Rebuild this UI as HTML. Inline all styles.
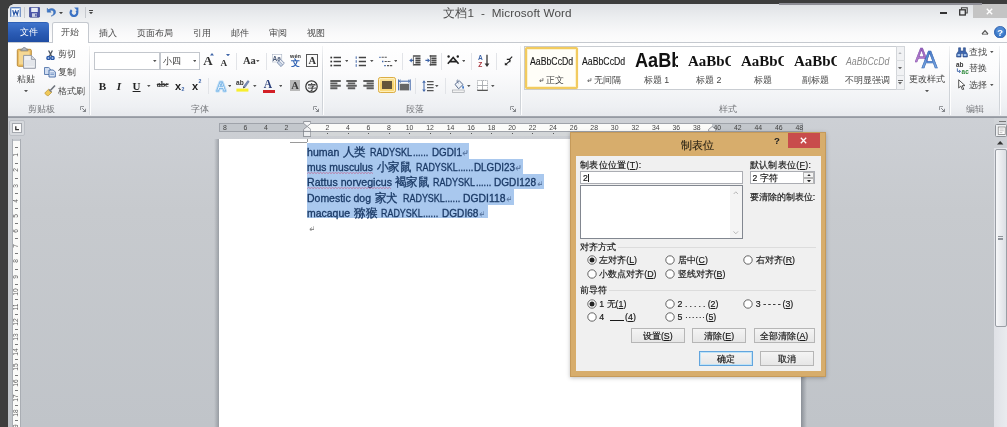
<!DOCTYPE html>
<html><head><meta charset="utf-8"><title>Word</title>
<style>
html,body{margin:0;padding:0}
body{width:1007px;height:427px;overflow:hidden;position:relative;background:#3d3d3d;font-family:"Liberation Sans",sans-serif}
div,svg{position:absolute;box-sizing:border-box}
.t{white-space:nowrap;overflow:visible}
span.s{display:inline-block;white-space:nowrap}
</style></head><body><div id="w" style="left:0;top:0;width:1007px;height:427px;will-change:transform">
<div style="left:8px;top:3.6px;width:999px;height:39px;background:linear-gradient(#dfe1e5 0%,#eceef0 35%,#f9f9fa 75%,#fdfdfd 100%)"></div>
<div style="left:8px;top:3.6px;width:6px;height:6px;background:radial-gradient(circle at 6px 6px,rgba(0,0,0,0) 5.5px,#3d3d3d 6px)"></div>
<div style="left:973px;top:4px;width:34px;height:13.5px;background:#c4c4c4"></div>
<svg style="left:985.5px;top:7.5px;" width="7" height="7" viewBox="0 0 7 7"><path d="M0.8 0.8L6.2 6.2M6.2 0.8L0.8 6.2" stroke="#fff" stroke-width="1.4"/></svg>
<div style="left:940px;top:12px;width:7px;height:2px;background:#333"></div>
<svg style="left:958.5px;top:6.5px;" width="9" height="9" viewBox="0 0 9 9"><path d="M2.5 2.5V0.8H8.2V6H6.5" fill="none" stroke="#444" stroke-width="1.1"/><rect x="0.7" y="2.8" width="5.6" height="5.2" fill="none" stroke="#333" stroke-width="1.3"/></svg>
<div class="t" style="left:407.5px;top:6.0px;width:200px;text-align:center;font-size:11.7px;line-height:14px;color:#4b4b4b;white-space:pre;letter-spacing:.12px">文档1  -  Microsoft Word</div>
<svg style="left:9.9px;top:6.7px;" width="11.2" height="10.8" viewBox="0 0 13 12.5"><rect x="0.5" y="0.5" width="12" height="11.5" rx="1" fill="#e9f0fa" stroke="#3b67b0" stroke-width="1"/><rect x="2" y="2" width="9" height="8.5" fill="#fff" stroke="#8fb0dc" stroke-width=".6"/><path d="M3.2 3.5L4.6 9L6.5 4.6L8.4 9L9.8 3.5" fill="none" stroke="#2a56a4" stroke-width="1.4"/></svg>
<div style="left:24px;top:7px;width:1px;height:11px;background:#c6c9ce"></div>
<svg style="left:29px;top:7px;" width="11" height="10.5" viewBox="0 0 11 10.5"><rect x="0.3" y="0.3" width="10.4" height="9.9" rx="1" fill="#4a55a8" stroke="#2c3580" stroke-width=".6"/><rect x="2.2" y="0.8" width="6.6" height="4.2" fill="#e8ecf6"/><rect x="3" y="6.3" width="5" height="3.6" fill="#c9cfe6"/><rect x="6.3" y="6.9" width="1.2" height="2.5" fill="#3a4494"/></svg>
<svg style="left:46px;top:7px;" width="10" height="10" viewBox="0 0 10 10"><path d="M1.2 1.2V5.2H5.2L3.7 3.8C5.3 2.6 7.6 3.2 7.6 5.4C7.6 7 6.6 8.2 5 9.2C8 8.6 9.6 7 9.6 5C9.6 1.8 5.4 0.2 2.6 2.6Z" fill="#3f78c8" stroke="#2d5fa8" stroke-width=".4"/></svg>
<svg style="left:58.8px;top:11.9px;" width="4" height="2.2" viewBox="0 0 4 2.2"><path d="M0 0H4L2.0 2.2Z" fill="#444"/></svg>
<svg style="left:69.3px;top:7.2px;" width="10" height="10" viewBox="0 0 10 10"><path d="M2.7 3.2A3.3 3.3 0 1 0 7.4 3.4" fill="none" stroke="#3b72c4" stroke-width="2.3"/><path d="M5.2 0.4H9.4V4.8Z" fill="#3b72c4"/></svg>
<div style="left:85px;top:7px;width:1px;height:11px;background:#c6c9ce"></div>
<div style="left:88.6px;top:10.2px;width:4px;height:1px;background:#444"></div>
<svg style="left:88.6px;top:12.1px;" width="4" height="2.2" viewBox="0 0 4 2.2"><path d="M0 0H4L2.0 2.2Z" fill="#444"/></svg>
<div style="left:8px;top:22px;width:41px;height:20.4px;background:linear-gradient(#3f74cc,#2a5bb4 55%,#1f4da3);border-radius:0 3px 0 0;border-top:1px solid #2e60b6"></div>
<div class="t" style="left:8.6px;top:26.3px;width:40px;text-align:center;font-size:8.8px;line-height:12px;color:#fff;">文件</div>
<div class="t" style="left:78.0px;top:26.6px;width:60px;text-align:center;font-size:8.8px;line-height:12px;color:#4a4a4a;">插入</div>
<div class="t" style="left:124.9px;top:26.6px;width:60px;text-align:center;font-size:8.8px;line-height:12px;color:#4a4a4a;">页面布局</div>
<div class="t" style="left:172.0px;top:26.6px;width:60px;text-align:center;font-size:8.8px;line-height:12px;color:#4a4a4a;">引用</div>
<div class="t" style="left:210.0px;top:26.6px;width:60px;text-align:center;font-size:8.8px;line-height:12px;color:#4a4a4a;">邮件</div>
<div class="t" style="left:248.3px;top:26.6px;width:60px;text-align:center;font-size:8.8px;line-height:12px;color:#4a4a4a;">审阅</div>
<div class="t" style="left:286.0px;top:26.6px;width:60px;text-align:center;font-size:8.8px;line-height:12px;color:#4a4a4a;">视图</div>
<svg style="left:980.5px;top:29px;" width="8" height="6" viewBox="0 0 8 6"><path d="M1 5L4 1.6L7 5" fill="none" stroke="#555" stroke-width="1.2"/><path d="M1 5.2H7" stroke="#555" stroke-width=".8"/></svg>
<svg style="left:993.6px;top:25.6px;" width="12.4" height="12.4" viewBox="0 0 12.4 12.4"><circle cx="6.2" cy="6.2" r="5.8" fill="#3b78c8" stroke="#2a5aa8" stroke-width=".8"/><circle cx="6.2" cy="5" r="4.2" fill="#5c96dc" opacity=".6"/><text x="6.2" y="9.6" font-size="9.5" font-weight="bold" fill="#fff" text-anchor="middle" font-family="Liberation Sans">?</text></svg>
<div style="left:779px;top:3.4px;width:203px;height:1.5px;background:#8e8e96"></div>
<div style="left:8px;top:42px;width:999px;height:76px;background:linear-gradient(#ffffff 0%,#fbfbfc 40%,#eef0f3 85%,#e6e8ec 100%);border-top:1px solid #c5c9cf"></div>
<div style="left:8px;top:116px;width:999px;height:2.2px;background:linear-gradient(#a9adb4,#8f949c)"></div>
<div style="left:52.2px;top:22.3px;width:36.8px;height:20.8px;background:#fff;border:1px solid #c5c9cf;border-bottom:none;border-radius:2.5px 2.5px 0 0"></div>
<div class="t" style="left:50.3px;top:26.3px;width:40px;text-align:center;font-size:8.8px;line-height:12px;color:#4a4a4a;">开始</div>
<div style="left:89px;top:46px;width:1px;height:69px;background:linear-gradient(rgba(200,204,210,.2),#cfd3d8 40%,#cfd3d8 90%,rgba(200,204,210,.4))"></div>
<div style="left:90px;top:46px;width:1px;height:69px;background:rgba(255,255,255,.9)"></div>
<div style="left:322px;top:46px;width:1px;height:69px;background:linear-gradient(rgba(200,204,210,.2),#cfd3d8 40%,#cfd3d8 90%,rgba(200,204,210,.4))"></div>
<div style="left:323px;top:46px;width:1px;height:69px;background:rgba(255,255,255,.9)"></div>
<div style="left:519.6px;top:46px;width:1px;height:69px;background:linear-gradient(rgba(200,204,210,.2),#cfd3d8 40%,#cfd3d8 90%,rgba(200,204,210,.4))"></div>
<div style="left:520.6px;top:46px;width:1px;height:69px;background:rgba(255,255,255,.9)"></div>
<div style="left:949.4px;top:46px;width:1px;height:69px;background:linear-gradient(rgba(200,204,210,.2),#cfd3d8 40%,#cfd3d8 90%,rgba(200,204,210,.4))"></div>
<div style="left:950.4px;top:46px;width:1px;height:69px;background:rgba(255,255,255,.9)"></div>
<div style="left:999.2px;top:46px;width:1px;height:69px;background:linear-gradient(rgba(200,204,210,.2),#cfd3d8 40%,#cfd3d8 90%,rgba(200,204,210,.4))"></div>
<div style="left:1000.2px;top:46px;width:1px;height:69px;background:rgba(255,255,255,.9)"></div>
<div class="t" style="left:11.5px;top:103.0px;width:60px;text-align:center;font-size:8.8px;line-height:12px;color:#77797d;">剪贴板</div>
<div class="t" style="left:169.5px;top:103.0px;width:60px;text-align:center;font-size:8.8px;line-height:12px;color:#77797d;">字体</div>
<div class="t" style="left:384.7px;top:103.0px;width:60px;text-align:center;font-size:8.8px;line-height:12px;color:#77797d;">段落</div>
<div class="t" style="left:697.7px;top:103.0px;width:60px;text-align:center;font-size:8.8px;line-height:12px;color:#77797d;">样式</div>
<div class="t" style="left:945.0px;top:103.0px;width:60px;text-align:center;font-size:8.8px;line-height:12px;color:#77797d;">编辑</div>
<svg style="left:80px;top:105.5px;" width="6" height="6" viewBox="0 0 6 6"><path d="M0.5 4V0.5H4" fill="none" stroke="#8a8d92" stroke-width=".9"/><path d="M2.2 2.2L5.4 5.4M5.6 2.8V5.6H2.8" fill="none" stroke="#6f7277" stroke-width=".9"/></svg>
<svg style="left:313px;top:105.5px;" width="6" height="6" viewBox="0 0 6 6"><path d="M0.5 4V0.5H4" fill="none" stroke="#8a8d92" stroke-width=".9"/><path d="M2.2 2.2L5.4 5.4M5.6 2.8V5.6H2.8" fill="none" stroke="#6f7277" stroke-width=".9"/></svg>
<svg style="left:510px;top:105.5px;" width="6" height="6" viewBox="0 0 6 6"><path d="M0.5 4V0.5H4" fill="none" stroke="#8a8d92" stroke-width=".9"/><path d="M2.2 2.2L5.4 5.4M5.6 2.8V5.6H2.8" fill="none" stroke="#6f7277" stroke-width=".9"/></svg>
<svg style="left:939px;top:105.5px;" width="6" height="6" viewBox="0 0 6 6"><path d="M0.5 4V0.5H4" fill="none" stroke="#8a8d92" stroke-width=".9"/><path d="M2.2 2.2L5.4 5.4M5.6 2.8V5.6H2.8" fill="none" stroke="#6f7277" stroke-width=".9"/></svg>
<svg style="left:16px;top:46px;" width="22" height="23" viewBox="0 0 22 23">
<rect x="1.3" y="3.3" width="14" height="17" rx="1.2" fill="#edbe62" stroke="#bb8c3c" stroke-width="1"/>
<rect x="3" y="5.4" width="10.6" height="13" fill="#f5d894"/>
<path d="M4.8 4.8V3.2H6.4C6.4 0.9 10.2 0.9 10.2 3.2H11.8V4.8Z" fill="#b3b6bc" stroke="#74787f" stroke-width=".7"/>
<path d="M7.6 9.4H15.4L19.4 13.4V22.3H7.6Z" fill="#eef0f3" stroke="#8b929e" stroke-width=".9"/>
<path d="M9 15H18M9 17H18M9 19H18" stroke="#d3d7dd" stroke-width=".8"/>
<path d="M15.4 9.4V13.4H19.4" fill="#d9dde4" stroke="#8b929e" stroke-width=".8"/>
</svg>
<div class="t" style="left:5.6px;top:73.2px;width:40px;text-align:center;font-size:8.8px;line-height:12px;color:#444;">粘贴</div>
<svg style="left:24.0px;top:89.85px;" width="4" height="2.3" viewBox="0 0 4 2.3"><path d="M0 0H4L2.0 2.3Z" fill="#555"/></svg>
<svg style="left:45.5px;top:49.5px;" width="9" height="10.5" viewBox="0 0 9 10.5">
<path d="M2.6 0.5L5.6 6.2M6.4 0.5L3.4 6.2" stroke="#4a525e" stroke-width="1.3" fill="none"/>
<circle cx="2.5" cy="8" r="1.6" fill="#9db9e4" stroke="#2a58a8" stroke-width="1.4"/>
<circle cx="6.5" cy="8" r="1.6" fill="#9db9e4" stroke="#2a58a8" stroke-width="1.4"/>
</svg>
<div class="t" style="left:58px;top:48.4px;font-size:8.8px;line-height:12px;color:#444;">剪切</div>
<svg style="left:43.8px;top:67px;" width="12" height="10.5" viewBox="0 0 12 10.5">
<path d="M0.5 0.5H4.8L6.5 2.2V7.5H0.5Z" fill="#cfdcf0" stroke="#5577ad" stroke-width=".9"/>
<path d="M5 3H9.3L11.3 5V10H5Z" fill="#dfe9f7" stroke="#3f64a0" stroke-width=".9"/>
<path d="M6.3 6H10M6.3 7.6H10" stroke="#5f84bd" stroke-width=".8"/>
</svg>
<div class="t" style="left:58px;top:66.2px;font-size:8.8px;line-height:12px;color:#444;">复制</div>
<svg style="left:44px;top:85px;" width="12" height="11.5" viewBox="0 0 12 11.5">
<path d="M11 0.6L6.3 5.6" stroke="#6a6f78" stroke-width="1.5"/>
<path d="M4.6 4.2L7.8 7.2L4.2 10.8C2.8 10.6 1.4 9.4 0.8 8Z" fill="#f0c95a" stroke="#b8902e" stroke-width=".7"/>
<path d="M4.9 4.5L7.5 7" stroke="#7d7f85" stroke-width="1.3"/>
</svg>
<div class="t" style="left:58px;top:84.8px;font-size:8.8px;line-height:12px;color:#444;">格式刷</div>
<div style="left:93.5px;top:52px;width:66.5px;height:18.4px;background:#fff;border:1px solid #c3c7cd"></div>
<div style="left:159.5px;top:52px;width:40.2px;height:18.4px;background:#fff;border:1px solid #c3c7cd"></div>
<svg style="left:153.2px;top:60.35px;" width="3.6" height="2.1" viewBox="0 0 3.6 2.1"><path d="M0 0H3.6L1.8 2.1Z" fill="#555"/></svg>
<svg style="left:192.5px;top:60.35px;" width="3.6" height="2.1" viewBox="0 0 3.6 2.1"><path d="M0 0H3.6L1.8 2.1Z" fill="#555"/></svg>
<div class="t" style="left:163px;top:55.2px;font-size:8.8px;line-height:12px;color:#333;">小四</div>
<div class="t" style="left:203.3px;top:54.2px;font-size:13px;line-height:14px;color:#333;font-family:'Liberation Serif',serif;font-weight:bold">A</div>
<svg style="left:210.2px;top:53.2px;" width="4" height="2.4" viewBox="0 0 4 2.4"><path d="M0 2.4H4L2 0Z" fill="#3f65a8"/></svg>
<div class="t" style="left:220.6px;top:56.6px;font-size:9.2px;line-height:12px;color:#333;font-family:'Liberation Serif',serif;font-weight:bold">A</div>
<svg style="left:226.2px;top:53.6px;" width="4" height="2.4" viewBox="0 0 4 2.4"><path d="M0 0H4L2 2.4Z" fill="#3f65a8"/></svg>
<div style="left:236px;top:53px;width:1px;height:17px;background:#e2e4e8"></div>
<div class="t" style="left:243px;top:55.2px;font-size:10.5px;line-height:12px;color:#333;font-family:'Liberation Serif',serif;font-weight:bold">Aa</div>
<svg style="left:256.4px;top:60.35px;" width="3.6" height="2.1" viewBox="0 0 3.6 2.1"><path d="M0 0H3.6L1.8 2.1Z" fill="#555"/></svg>
<div style="left:266px;top:53px;width:1px;height:17px;background:#e2e4e8"></div>
<svg style="left:272px;top:53.5px;" width="13" height="13" viewBox="0 0 13 13">
<text x="0.5" y="6.6" font-size="6.5" font-weight="bold" fill="#4a5a78" font-family="Liberation Sans">Aa</text>
<rect x="0.2" y="0.6" width="9.6" height="7.4" fill="none" stroke="#9aa6ba" stroke-width=".5"/>
<path d="M5.2 8.6L8.6 5.4L12.4 9.2L9 12.4Z" fill="#e9edf4" stroke="#6d7f9f" stroke-width=".8"/>
<path d="M5.2 8.6L7 6.9L10.7 10.7L9 12.4Z" fill="#c9d4e6" stroke="#6d7f9f" stroke-width=".5"/>
</svg>
<svg style="left:288.5px;top:53px;" width="13" height="14" viewBox="0 0 13 14">
<text x="6.5" y="4.6" font-size="5.6" font-weight="bold" fill="#333" text-anchor="middle" font-family="Liberation Sans">wén</text>
<text x="6.5" y="13" font-size="9.2" fill="#2f62b4" text-anchor="middle" font-family="Liberation Sans" font-weight="bold">文</text>
</svg>
<div style="left:306.3px;top:54.2px;width:12px;height:12.6px;border:1px solid #555;background:#fafafa"></div>
<div class="t" style="left:306.3px;top:54.8px;width:12px;text-align:center;font-size:10.5px;line-height:12px;color:#333;font-family:'Liberation Serif',serif;font-weight:bold">A</div>
<div class="t" style="left:98.8px;top:79.6px;font-size:11.2px;line-height:12px;color:#222;font-family:'Liberation Serif',serif;font-weight:bold">B</div>
<div class="t" style="left:116.8px;top:79.6px;font-size:11.2px;line-height:12px;color:#222;font-family:'Liberation Serif',serif;font-style:italic;font-weight:bold">I</div>
<div class="t" style="left:132.6px;top:79.6px;font-size:11px;line-height:12px;color:#222;font-family:'Liberation Serif',serif;font-weight:bold;text-decoration:underline">U</div>
<svg style="left:147.2px;top:84.95px;" width="3.6" height="2.1" viewBox="0 0 3.6 2.1"><path d="M0 0H3.6L1.8 2.1Z" fill="#555"/></svg>
<div class="t" style="left:156.8px;top:79.4px;font-size:8.4px;line-height:12px;color:#333;font-family:'Liberation Serif',serif;font-weight:bold;text-decoration:line-through;letter-spacing:-.3px">abc</div>
<div class="t" style="left:175px;top:79.6px;font-size:11px;line-height:12px;color:#222;font-weight:bold">x</div>
<div class="t" style="left:181.6px;top:86.4px;font-size:5.2px;line-height:6px;color:#3f65a8;font-weight:bold">2</div>
<div class="t" style="left:192px;top:79.6px;font-size:11px;line-height:12px;color:#222;font-weight:bold">x</div>
<div class="t" style="left:198.4px;top:78.4px;font-size:5.2px;line-height:6px;color:#3f65a8;font-weight:bold">2</div>
<div style="left:208px;top:78px;width:1px;height:16px;background:#e2e4e8"></div>
<svg style="left:213.5px;top:78.5px;" width="14" height="14" viewBox="0 0 14 14">
<text x="7" y="12" font-size="13.5" font-weight="bold" fill="#fff" stroke="#bfdef6" stroke-width="2.8" text-anchor="middle" font-family="Liberation Sans" stroke-linejoin="round">A</text>
<text x="7" y="12" font-size="13.5" font-weight="bold" fill="#fdfeff" stroke="#72b1e6" stroke-width=".8" text-anchor="middle" font-family="Liberation Sans">A</text>
</svg>
<svg style="left:227.8px;top:84.95px;" width="3.6" height="2.1" viewBox="0 0 3.6 2.1"><path d="M0 0H3.6L1.8 2.1Z" fill="#555"/></svg>
<svg style="left:236px;top:79px;" width="14" height="13" viewBox="0 0 14 13">
<text x="0" y="6.2" font-size="6.6" font-weight="bold" fill="#333" font-family="Liberation Sans">ab</text>
<path d="M7.4 7.6L11.8 1.6L13.2 2.6L9 8.6Z" fill="#7b8fb8" stroke="#4a5f8c" stroke-width=".5"/>
<path d="M7.4 7.6L9 8.6L7 9.4Z" fill="#333"/>
<rect x="0.4" y="9.6" width="12" height="3" fill="#f7ee2e"/>
</svg>
<svg style="left:253.2px;top:84.95px;" width="3.6" height="2.1" viewBox="0 0 3.6 2.1"><path d="M0 0H3.6L1.8 2.1Z" fill="#555"/></svg>
<div class="t" style="left:263.8px;top:78.0px;font-size:11.5px;line-height:12px;color:#2b3f7a;font-family:'Liberation Serif',serif;font-weight:bold">A</div>
<div style="left:263px;top:89.6px;width:12px;height:3px;background:#d21f26"></div>
<svg style="left:278.8px;top:84.95px;" width="3.6" height="2.1" viewBox="0 0 3.6 2.1"><path d="M0 0H3.6L1.8 2.1Z" fill="#555"/></svg>
<div style="left:289.6px;top:80.3px;width:10.8px;height:11.2px;background:#b9b9b9"></div>
<div class="t" style="left:289.0px;top:79.9px;width:12px;text-align:center;font-size:10.5px;line-height:12px;color:#3a3a3a;font-family:'Liberation Serif',serif;font-weight:bold">A</div>
<svg style="left:304.6px;top:79.6px;" width="13" height="13" viewBox="0 0 13 13"><circle cx="6.5" cy="6.5" r="5.7" fill="none" stroke="#333" stroke-width="1.2"/><text x="6.5" y="9.5" font-size="8" font-weight="bold" fill="#222" text-anchor="middle" font-family="Liberation Sans">字</text></svg>
<svg style="left:329.5px;top:55.5px;" width="12" height="11" viewBox="0 0 12 11"><path d="M3.6 1.5H11M3.6 5.5H11M3.6 9.5H11" stroke="#444" stroke-width="1.4"/><rect x="0.4" y="0.7" width="1.7" height="1.7" fill="#333"/><rect x="0.4" y="4.7" width="1.7" height="1.7" fill="#333"/><rect x="0.4" y="8.7" width="1.7" height="1.7" fill="#333"/></svg>
<svg style="left:344.6px;top:60.35px;" width="3.6" height="2.1" viewBox="0 0 3.6 2.1"><path d="M0 0H3.6L1.8 2.1Z" fill="#555"/></svg>
<svg style="left:354.5px;top:55.5px;" width="12" height="11" viewBox="0 0 12 11"><path d="M3.8 1.5H11M3.8 5.5H11M3.8 9.5H11" stroke="#444" stroke-width="1.4"/><path d="M1.2 0.4V2.8M1.2 4.2V6.8M1.2 8.2V10.8" stroke="#3f65a8" stroke-width="1"/></svg>
<svg style="left:370.2px;top:60.35px;" width="3.6" height="2.1" viewBox="0 0 3.6 2.1"><path d="M0 0H3.6L1.8 2.1Z" fill="#555"/></svg>
<svg style="left:378.8px;top:55.5px;" width="14" height="11" viewBox="0 0 14 11"><path d="M2.6 1.3H8.5M5.6 5.5H12M8 9.6H13.5" stroke="#555" stroke-width="1.1" stroke-dasharray="2.2 .8"/><path d="M0.3 1.3H1.6M3 5.5H4.4M5.2 9.6H6.8" stroke="#3f65a8" stroke-width="1.3"/></svg>
<svg style="left:393.5px;top:60.35px;" width="3.6" height="2.1" viewBox="0 0 3.6 2.1"><path d="M0 0H3.6L1.8 2.1Z" fill="#555"/></svg>
<div style="left:402px;top:53px;width:1px;height:17px;background:#e2e4e8"></div>
<svg style="left:408.5px;top:55.3px;" width="12" height="11.5" viewBox="0 0 12 11.5"><path d="M4.6 1H11.5M6.4 3.2H11.5M6.4 5.4H11.5M6.4 7.6H11.5M4.6 9.8H11.5" stroke="#4a4a4a" stroke-width="1.6"/><path d="M0.2 5.4L2.8 3.2V4.7H5V6.1H2.8V7.6Z" fill="#3f65a8"/><path d="M4.4 0.2V10.6" stroke="#4a4a4a" stroke-width=".8"/></svg>
<svg style="left:424.8px;top:55.3px;" width="12" height="11.5" viewBox="0 0 12 11.5"><path d="M4.6 1H11.5M6.4 3.2H11.5M6.4 5.4H11.5M6.4 7.6H11.5M4.6 9.8H11.5" stroke="#4a4a4a" stroke-width="1.6"/><path d="M5.2 5.4L2.6 3.2V4.7H0.4V6.1H2.6V7.6Z" fill="#3f65a8"/><path d="M5.6 0.2V10.6" stroke="#4a4a4a" stroke-width=".8"/></svg>
<div style="left:441px;top:53px;width:1px;height:17px;background:#e2e4e8"></div>
<svg style="left:447.4px;top:54.6px;" width="13" height="10" viewBox="0 0 13 10"><path d="M0.8 8.8L6.2 2.4L11.6 8.8M2.8 6.6H9.6" fill="none" stroke="#222" stroke-width="1.6"/><circle cx="1.6" cy="1.5" r="1.2" fill="#222"/><circle cx="10.8" cy="1.5" r="1.2" fill="#222"/></svg>
<svg style="left:461.6px;top:60.35px;" width="3.6" height="2.1" viewBox="0 0 3.6 2.1"><path d="M0 0H3.6L1.8 2.1Z" fill="#555"/></svg>
<div style="left:471px;top:53px;width:1px;height:17px;background:#e2e4e8"></div>
<svg style="left:476.5px;top:54px;" width="14" height="14" viewBox="0 0 14 14"><text x="3.3" y="6" font-size="6.6" font-weight="bold" fill="#3f65a8" text-anchor="middle" font-family="Liberation Sans">A</text><text x="3.3" y="13" font-size="6.6" font-weight="bold" fill="#a8323a" text-anchor="middle" font-family="Liberation Sans">Z</text><path d="M10 0.8V11" stroke="#333" stroke-width="1.3"/><path d="M7.6 9.4L10 13L12.4 9.4Z" fill="#333"/></svg>
<div style="left:496px;top:53px;width:1px;height:17px;background:#e2e4e8"></div>
<svg style="left:503.6px;top:56px;" width="9" height="10" viewBox="0 0 9 10"><path d="M8.2 0.6L5.2 3.6M2.8 3.4H5.8V6.2M6.6 4.4L1.6 8.6" stroke="#222" stroke-width="1.2" fill="none"/><path d="M0.8 6.4V9.2H3.8Z" fill="#222"/><path d="M3 3.4H6V0.8Z" fill="#222" opacity=".0"/></svg>
<svg style="left:329.6px;top:80.4px;" width="12" height="9.4" viewBox="0 0 12 9.4"><path d="M0.3 1H10.8M0.3 3.4H7.4M0.3 5.8H10.8M0.3 8.2H7.4" stroke="#5e5e5e" stroke-width="1.9"/></svg>
<svg style="left:346px;top:80.4px;" width="12" height="9.4" viewBox="0 0 12 9.4"><path d="M0.3 1H10.8M1.8 3.4H9.2M0.3 5.8H10.8M1.8 8.2H9.2" stroke="#5e5e5e" stroke-width="1.9"/></svg>
<svg style="left:363px;top:80.4px;" width="12" height="9.4" viewBox="0 0 12 9.4"><path d="M0.3 1H10.8M3.6 3.4H10.8M0.3 5.8H10.8M3.6 8.2H10.8" stroke="#5e5e5e" stroke-width="1.9"/></svg>
<div style="left:378.3px;top:77px;width:17.7px;height:16px;background:linear-gradient(#fbe7a8,#f7d066 50%,#fadb82);border:1px solid #dcae45;border-radius:2.2px;box-shadow:inset 0 0 0 1px rgba(255,244,200,.8)"></div>
<div style="left:381.7px;top:80.7px;width:10.6px;height:8.4px;background:repeating-linear-gradient(#64553a 0,#64553a 1.7px,#7d6d4c 1.7px,#7d6d4c 2.1px)"></div>
<svg style="left:398px;top:79.2px;" width="13" height="12" viewBox="0 0 13 12"><path d="M0.6 0.4V11.4M12.2 0.4V11.4" stroke="#3f65a8" stroke-width="1"/><path d="M1.2 2.2H11.6" stroke="#3f65a8" stroke-width="1"/><path d="M2.8 0.8L1.2 2.2L2.8 3.6M10 0.8L11.6 2.2L10 3.6" fill="none" stroke="#3f65a8" stroke-width=".8"/><rect x="1.8" y="4.8" width="9.2" height="6.6" fill="#666"/></svg>
<div style="left:415px;top:78px;width:1px;height:16px;background:#e2e4e8"></div>
<svg style="left:421.5px;top:79.6px;" width="12" height="12" viewBox="0 0 12 12"><path d="M5 1.6H11.6M5 4.6H11.6M5 7.6H11.6M5 10.6H11.6" stroke="#555" stroke-width="1.1"/><path d="M2 0.2L3.8 2.8H0.2ZM2 12L3.8 9.4H0.2Z" fill="#3f65a8"/><path d="M2 2.4V9.8" stroke="#3f65a8" stroke-width="1"/></svg>
<svg style="left:435.4px;top:84.95px;" width="3.6" height="2.1" viewBox="0 0 3.6 2.1"><path d="M0 0H3.6L1.8 2.1Z" fill="#555"/></svg>
<div style="left:445px;top:78px;width:1px;height:16px;background:#e2e4e8"></div>
<svg style="left:451.5px;top:78.6px;" width="13" height="14" viewBox="0 0 13 14"><path d="M3 5.4L7.2 1.6L11 5.6L6.6 9.8Z" fill="#eef2f8" stroke="#4a5d82" stroke-width=".9"/><path d="M5.6 0.6C4.6 2 5.2 3.4 6.6 4.2" fill="none" stroke="#4a5d82" stroke-width=".8"/><path d="M10.8 6C11.6 7.4 12.6 8.2 11.8 9.4C11 10.2 10 9.4 10.2 8.2Z" fill="#3f78c8"/><rect x="0.6" y="11" width="11.6" height="2.6" fill="#f2f2f2" stroke="#9a9da3" stroke-width=".6"/></svg>
<svg style="left:467.4px;top:84.95px;" width="3.6" height="2.1" viewBox="0 0 3.6 2.1"><path d="M0 0H3.6L1.8 2.1Z" fill="#555"/></svg>
<svg style="left:476.8px;top:80px;" width="11" height="11" viewBox="0 0 11 11"><rect x="0.5" y="0.5" width="10" height="10" fill="#fff" stroke="#a6a9ae" stroke-width=".9" stroke-dasharray="1.2 .6"/><path d="M5.5 0.5V10.5M0.5 5.5H10.5" stroke="#a6a9ae" stroke-width=".9"/><path d="M0.3 10.4H10.7" stroke="#555" stroke-width="1.4"/></svg>
<svg style="left:491.4px;top:84.95px;" width="3.6" height="2.1" viewBox="0 0 3.6 2.1"><path d="M0 0H3.6L1.8 2.1Z" fill="#555"/></svg>
<div style="left:524.3px;top:46px;width:381px;height:44px;background:#fff;border:1px solid #c9cdd2"></div>
<div style="left:895.7px;top:46px;width:9.6px;height:44px;background:#f1f2f4;border:1px solid #d3d6da"></div>
<div style="left:895.7px;top:60.4px;width:9.6px;height:1px;background:#d9dcdf"></div>
<div style="left:895.7px;top:74.8px;width:9.6px;height:1px;background:#d9dcdf"></div>
<svg style="left:898.3px;top:52px;" width="4" height="2.4" viewBox="0 0 4 2.4"><path d="M0 2.4H4L2 0Z" fill="#b4b7bc"/></svg>
<svg style="left:898.3px;top:66.8px;" width="4" height="2.4" viewBox="0 0 4 2.4"><path d="M0 0H4L2.0 2.4Z" fill="#666"/></svg>
<div style="left:898.2px;top:79.6px;width:4.4px;height:1px;background:#666"></div>
<svg style="left:898.3px;top:82.4px;" width="4" height="2.4" viewBox="0 0 4 2.4"><path d="M0 0H4L2.0 2.4Z" fill="#666"/></svg>
<div style="left:525.2px;top:47px;width:52.6px;height:41.8px;background:#fffef8;border:2px solid #f2cb5f;border-radius:2.5px;box-shadow:inset 0 0 0 1px #fdf3cf,0 0 1px #f2cb5f"></div>
<div class="t" style="left:529.5px;top:55.0px;font-size:10.4px;line-height:14px;color:#1a1a1a;"><span class="s" style="display:inline-block;transform-origin:0 50%;transform:scaleX(0.84);-webkit-text-stroke:.15px #1a1a1a">AaBbCcDd</span></div>
<div class="t" style="left:582px;top:55.0px;font-size:10.4px;line-height:14px;color:#1a1a1a;"><span class="s" style="display:inline-block;transform-origin:0 50%;transform:scaleX(0.84);-webkit-text-stroke:.15px #1a1a1a">AaBbCcDd</span></div>
<svg style="left:539.3px;top:78.0px;" width="4.4" height="4.4" viewBox="0 0 4.4 4.4"><path d="M3.9 0.2V2.8H1M2.2 1.4L0.6 2.8L2.2 4.2" fill="none" stroke="#555" stroke-width=".8"/></svg>
<div class="t" style="left:546px;top:73.9px;font-size:8.8px;line-height:12px;color:#444;">正文</div>
<svg style="left:587.2px;top:78.0px;" width="4.4" height="4.4" viewBox="0 0 4.4 4.4"><path d="M3.9 0.2V2.8H1M2.2 1.4L0.6 2.8L2.2 4.2" fill="none" stroke="#555" stroke-width=".8"/></svg>
<div class="t" style="left:594px;top:73.9px;font-size:8.8px;line-height:12px;color:#444;">无间隔</div>
<div style="left:634px;top:48px;width:44.4px;height:24px;overflow:hidden"><div class="t" style="left:1px;top:1px;font-size:19.5px;line-height:22px;font-weight:bold;color:#111"><span class="s" style="transform-origin:0 50%;transform:scaleX(.93)">AaBb(</span></div></div>
<div class="t" style="left:643.7px;top:73.9px;font-size:8.8px;line-height:12px;color:#444;">标题 1</div>
<div style="left:687px;top:50px;width:44.2px;height:22px;overflow:hidden"><div class="t" style="left:1px;top:1px;font-size:15.6px;line-height:20px;color:#111;font-family:'Liberation Serif',serif;font-weight:bold;"><span class="s" style="transform-origin:0 50%;transform:scaleX(.96)">AaBbCc</span></div></div>
<div class="t" style="left:696px;top:73.9px;font-size:8.8px;line-height:12px;color:#444;">标题 2</div>
<div style="left:739.6px;top:50px;width:44.2px;height:22px;overflow:hidden"><div class="t" style="left:1px;top:1px;font-size:15.6px;line-height:20px;color:#111;font-family:'Liberation Serif',serif;font-weight:bold;"><span class="s" style="transform-origin:0 50%;transform:scaleX(.96)">AaBbCc</span></div></div>
<div class="t" style="left:753.6px;top:73.9px;font-size:8.8px;line-height:12px;color:#444;">标题</div>
<div style="left:792.6px;top:50px;width:44.2px;height:22px;overflow:hidden"><div class="t" style="left:1px;top:1px;font-size:15.6px;line-height:20px;color:#111;font-family:'Liberation Serif',serif;font-weight:bold;"><span class="s" style="transform-origin:0 50%;transform:scaleX(.96)">AaBbCc</span></div></div>
<div class="t" style="left:801.7px;top:73.9px;font-size:8.8px;line-height:12px;color:#444;">副标题</div>
<div class="t" style="left:846px;top:55.0px;font-size:10.2px;line-height:14px;color:#8a8a8a;"><span class="s" style="display:inline-block;transform-origin:0 50%;transform:scaleX(0.86);font-style:italic">AaBbCcDd</span></div>
<div class="t" style="left:845.3px;top:73.9px;font-size:8.8px;line-height:12px;color:#444;">不明显强调</div>
<svg style="left:914.5px;top:46px;" width="24" height="23" viewBox="0 0 24 23">
<defs><linearGradient id="gp" x1="0" y1="0" x2="0" y2="1"><stop offset="0" stop-color="#8a58b8"/><stop offset="1" stop-color="#c58ad6"/></linearGradient>
<linearGradient id="gb" x1="0" y1="0" x2="0" y2="1"><stop offset="0" stop-color="#3f72c4"/><stop offset="1" stop-color="#86b4e8"/></linearGradient></defs>
<text x="6.6" y="15.6" font-size="19.5" fill="url(#gp)" stroke="#7d4aa6" stroke-width=".5" text-anchor="middle" font-family="Liberation Sans">A</text>
<text x="14.6" y="21.6" font-size="23.5" fill="url(#gb)" stroke="#2f5fae" stroke-width=".6" text-anchor="middle" font-family="Liberation Sans">A</text>
</svg>
<div class="t" style="left:901.8px;top:72.7px;width:50px;text-align:center;font-size:8.8px;line-height:12px;color:#444;">更改样式</div>
<svg style="left:924.6px;top:89.85px;" width="4" height="2.3" viewBox="0 0 4 2.3"><path d="M0 0H4L2.0 2.3Z" fill="#555"/></svg>
<svg style="left:955.5px;top:47px;" width="12" height="10.5" viewBox="0 0 12 10.5"><path d="M2.6 0.8H4.6V4H7.4V0.8H9.4V4L11.4 7V10H7V6.6H5V10H0.6V7L2.6 4Z" fill="#3e66ad" stroke="#27457f" stroke-width=".6"/><rect x="1.6" y="7" width="2.6" height="2" fill="#9fc0ea"/><rect x="7.8" y="7" width="2.6" height="2" fill="#9fc0ea"/></svg>
<div class="t" style="left:969px;top:46.2px;font-size:8.8px;line-height:12px;color:#444;">查找</div>
<svg style="left:990.4px;top:51.35px;" width="3.6" height="2.1" viewBox="0 0 3.6 2.1"><path d="M0 0H3.6L1.8 2.1Z" fill="#555"/></svg>
<svg style="left:955.5px;top:62px;" width="13" height="12" viewBox="0 0 13 12"><text x="0" y="5.4" font-size="6.4" font-weight="bold" fill="#333" font-family="Liberation Sans">ab</text><text x="5.6" y="11.6" font-size="6.4" font-weight="bold" fill="#2f8a3c" font-family="Liberation Sans">ac</text><path d="M1.4 6.4V9.4H4.2M3 8L4.6 9.4L3 10.8" fill="none" stroke="#3f65a8" stroke-width=".9"/></svg>
<div class="t" style="left:969px;top:62.2px;font-size:8.8px;line-height:12px;color:#444;">替换</div>
<svg style="left:957.5px;top:78.6px;" width="8" height="11.5" viewBox="0 0 8 11.5"><path d="M0.7 0.8V9L2.8 7L4.4 10.8L5.8 10.2L4.2 6.6H7Z" fill="#fff" stroke="#444" stroke-width=".9" stroke-linejoin="round"/></svg>
<div class="t" style="left:969px;top:78.5px;font-size:8.8px;line-height:12px;color:#444;">选择</div>
<svg style="left:990.4px;top:83.55px;" width="3.6" height="2.1" viewBox="0 0 3.6 2.1"><path d="M0 0H3.6L1.8 2.1Z" fill="#555"/></svg>
<div style="left:8px;top:118px;width:999px;height:309px;background:linear-gradient(#cdd0d5 0%,#c7cace 30%,#c0c4c9 100%)"></div>
<div style="left:214.4px;top:139px;width:5px;height:288px;background:linear-gradient(90deg,rgba(110,116,124,0),rgba(110,116,124,.5))"></div>
<div style="left:800.6px;top:139px;width:6px;height:288px;background:linear-gradient(90deg,rgba(105,111,120,.62),rgba(110,116,124,0))"></div>
<div style="left:219.4px;top:138.8px;width:581.2px;height:289px;background:#fff"></div>
<div style="left:219px;top:123.4px;width:583.6px;height:8.2px;background:#c3c7cc;border:1px solid #9fa3aa"></div>
<div style="left:307.3px;top:124.2px;width:404.6px;height:6.6px;background:#fbfbf9"></div>
<div style="left:307.3px;top:131.6px;width:404.6px;height:4.6px;background:#d3d6d8"></div>
<div class="t" style="left:216.82px;top:123.6px;width:16px;text-align:center;font-size:6.9px;line-height:8px;color:#444;">8</div>
<div class="t" style="left:237.34px;top:123.6px;width:16px;text-align:center;font-size:6.9px;line-height:8px;color:#444;">6</div>
<div class="t" style="left:257.86px;top:123.6px;width:16px;text-align:center;font-size:6.9px;line-height:8px;color:#444;">4</div>
<div class="t" style="left:278.38px;top:123.6px;width:16px;text-align:center;font-size:6.9px;line-height:8px;color:#444;">2</div>
<div class="t" style="left:319.42px;top:123.6px;width:16px;text-align:center;font-size:6.9px;line-height:8px;color:#444;">2</div>
<div style="left:327.02px;top:132.6px;width:0.9px;height:1.8px;background:#555"></div>
<div class="t" style="left:339.94px;top:123.6px;width:16px;text-align:center;font-size:6.9px;line-height:8px;color:#444;">4</div>
<div style="left:347.54px;top:132.6px;width:0.9px;height:1.8px;background:#555"></div>
<div class="t" style="left:360.46px;top:123.6px;width:16px;text-align:center;font-size:6.9px;line-height:8px;color:#444;">6</div>
<div style="left:368.06px;top:132.6px;width:0.9px;height:1.8px;background:#555"></div>
<div class="t" style="left:380.98px;top:123.6px;width:16px;text-align:center;font-size:6.9px;line-height:8px;color:#444;">8</div>
<div style="left:388.58px;top:132.6px;width:0.9px;height:1.8px;background:#555"></div>
<div class="t" style="left:401.5px;top:123.6px;width:16px;text-align:center;font-size:6.9px;line-height:8px;color:#444;">10</div>
<div style="left:409.1px;top:132.6px;width:0.9px;height:1.8px;background:#555"></div>
<div class="t" style="left:422.02px;top:123.6px;width:16px;text-align:center;font-size:6.9px;line-height:8px;color:#444;">12</div>
<div style="left:429.62px;top:132.6px;width:0.9px;height:1.8px;background:#555"></div>
<div class="t" style="left:442.54px;top:123.6px;width:16px;text-align:center;font-size:6.9px;line-height:8px;color:#444;">14</div>
<div style="left:450.14px;top:132.6px;width:0.9px;height:1.8px;background:#555"></div>
<div class="t" style="left:463.06px;top:123.6px;width:16px;text-align:center;font-size:6.9px;line-height:8px;color:#444;">16</div>
<div style="left:470.66px;top:132.6px;width:0.9px;height:1.8px;background:#555"></div>
<div class="t" style="left:483.58px;top:123.6px;width:16px;text-align:center;font-size:6.9px;line-height:8px;color:#444;">18</div>
<div style="left:491.18px;top:132.6px;width:0.9px;height:1.8px;background:#555"></div>
<div class="t" style="left:504.1px;top:123.6px;width:16px;text-align:center;font-size:6.9px;line-height:8px;color:#444;">20</div>
<div style="left:511.7px;top:132.6px;width:0.9px;height:1.8px;background:#555"></div>
<div class="t" style="left:524.62px;top:123.6px;width:16px;text-align:center;font-size:6.9px;line-height:8px;color:#444;">22</div>
<div style="left:532.22px;top:132.6px;width:0.9px;height:1.8px;background:#555"></div>
<div class="t" style="left:545.14px;top:123.6px;width:16px;text-align:center;font-size:6.9px;line-height:8px;color:#444;">24</div>
<div style="left:552.74px;top:132.6px;width:0.9px;height:1.8px;background:#555"></div>
<div class="t" style="left:565.66px;top:123.6px;width:16px;text-align:center;font-size:6.9px;line-height:8px;color:#444;">26</div>
<div style="left:573.26px;top:132.6px;width:0.9px;height:1.8px;background:#555"></div>
<div class="t" style="left:586.18px;top:123.6px;width:16px;text-align:center;font-size:6.9px;line-height:8px;color:#444;">28</div>
<div style="left:593.78px;top:132.6px;width:0.9px;height:1.8px;background:#555"></div>
<div class="t" style="left:606.7px;top:123.6px;width:16px;text-align:center;font-size:6.9px;line-height:8px;color:#444;">30</div>
<div style="left:614.3px;top:132.6px;width:0.9px;height:1.8px;background:#555"></div>
<div class="t" style="left:627.22px;top:123.6px;width:16px;text-align:center;font-size:6.9px;line-height:8px;color:#444;">32</div>
<div style="left:634.82px;top:132.6px;width:0.9px;height:1.8px;background:#555"></div>
<div class="t" style="left:647.74px;top:123.6px;width:16px;text-align:center;font-size:6.9px;line-height:8px;color:#444;">34</div>
<div style="left:655.34px;top:132.6px;width:0.9px;height:1.8px;background:#555"></div>
<div class="t" style="left:668.26px;top:123.6px;width:16px;text-align:center;font-size:6.9px;line-height:8px;color:#444;">36</div>
<div style="left:675.86px;top:132.6px;width:0.9px;height:1.8px;background:#555"></div>
<div class="t" style="left:688.78px;top:123.6px;width:16px;text-align:center;font-size:6.9px;line-height:8px;color:#444;">38</div>
<div style="left:696.38px;top:132.6px;width:0.9px;height:1.8px;background:#555"></div>
<div class="t" style="left:709.3px;top:123.6px;width:16px;text-align:center;font-size:6.9px;line-height:8px;color:#444;">40</div>
<div class="t" style="left:729.82px;top:123.6px;width:16px;text-align:center;font-size:6.9px;line-height:8px;color:#444;">42</div>
<div class="t" style="left:750.34px;top:123.6px;width:16px;text-align:center;font-size:6.9px;line-height:8px;color:#444;">44</div>
<div class="t" style="left:770.86px;top:123.6px;width:16px;text-align:center;font-size:6.9px;line-height:8px;color:#444;">46</div>
<div class="t" style="left:791.38px;top:123.6px;width:16px;text-align:center;font-size:6.9px;line-height:8px;color:#444;">48</div>
<svg style="left:302.8px;top:121px;" width="8.4" height="16" viewBox="0 0 8.4 16">
<path d="M0.6 0.5H7.8V2.4L4.2 5.4L0.6 2.4Z" fill="#f2f3f5" stroke="#83878e" stroke-width=".8"/>
<path d="M4.2 5.4L7.8 8.4V10.4H0.6V8.4Z" fill="#f2f3f5" stroke="#83878e" stroke-width=".8"/>
<rect x="0.6" y="10.4" width="7.2" height="5" fill="#eceef0" stroke="#83878e" stroke-width=".8"/>
</svg>
<svg style="left:707.6px;top:126px;" width="8.4" height="6" viewBox="0 0 8.4 6"><path d="M4.2 0.5L7.8 3.4V5.4H0.6V3.4Z" fill="#f2f3f5" stroke="#83878e" stroke-width=".8"/></svg>
<div style="left:9px;top:120px;width:15.6px;height:16px;background:#d6d9dd;border:1px solid #bcc0c6;border-radius:2px"></div>
<div style="left:12.2px;top:123.4px;width:9.6px;height:9.6px;background:#fbfbfb;border:1px solid #a4a8ae"></div>
<svg style="left:14.9px;top:126.2px;" width="4.5" height="4.5" viewBox="0 0 4.5 4.5"><path d="M0.8 0.2V3.6H4.2" fill="none" stroke="#333" stroke-width="1.3"/></svg>
<div style="left:11.6px;top:138.5px;width:9.6px;height:289px;background:#fafaf8;border:1px solid #a9adb3;border-bottom:none"></div>
<div style="left:12.6px;top:139.3px;width:7.6px;height:2.2px;background:#c3c7cc"></div>
<div style="left:15.2px;top:147.35px;width:2.6px;height:0.9px;background:#7a7a7a"></div>
<div class="t" style="left:8.4px;top:151.3px;width:16px;height:8px;text-align:center;font-size:6.6px;line-height:8px;color:#5a5a5a;transform:rotate(-90deg)">1</div>
<div style="left:15.2px;top:162.5px;width:2.6px;height:0.9px;background:#7a7a7a"></div>
<div class="t" style="left:8.4px;top:166.45px;width:16px;height:8px;text-align:center;font-size:6.6px;line-height:8px;color:#5a5a5a;transform:rotate(-90deg)">2</div>
<div style="left:15.2px;top:177.65px;width:2.6px;height:0.9px;background:#7a7a7a"></div>
<div class="t" style="left:8.4px;top:181.6px;width:16px;height:8px;text-align:center;font-size:6.6px;line-height:8px;color:#5a5a5a;transform:rotate(-90deg)">3</div>
<div style="left:15.2px;top:192.8px;width:2.6px;height:0.9px;background:#7a7a7a"></div>
<div class="t" style="left:8.4px;top:196.75px;width:16px;height:8px;text-align:center;font-size:6.6px;line-height:8px;color:#5a5a5a;transform:rotate(-90deg)">4</div>
<div style="left:15.2px;top:207.95px;width:2.6px;height:0.9px;background:#7a7a7a"></div>
<div class="t" style="left:8.4px;top:211.9px;width:16px;height:8px;text-align:center;font-size:6.6px;line-height:8px;color:#5a5a5a;transform:rotate(-90deg)">5</div>
<div style="left:15.2px;top:223.1px;width:2.6px;height:0.9px;background:#7a7a7a"></div>
<div class="t" style="left:8.4px;top:227.05px;width:16px;height:8px;text-align:center;font-size:6.6px;line-height:8px;color:#5a5a5a;transform:rotate(-90deg)">6</div>
<div style="left:15.2px;top:238.25px;width:2.6px;height:0.9px;background:#7a7a7a"></div>
<div class="t" style="left:8.4px;top:242.2px;width:16px;height:8px;text-align:center;font-size:6.6px;line-height:8px;color:#5a5a5a;transform:rotate(-90deg)">7</div>
<div style="left:15.2px;top:253.4px;width:2.6px;height:0.9px;background:#7a7a7a"></div>
<div class="t" style="left:8.4px;top:257.35px;width:16px;height:8px;text-align:center;font-size:6.6px;line-height:8px;color:#5a5a5a;transform:rotate(-90deg)">8</div>
<div style="left:15.2px;top:268.55px;width:2.6px;height:0.9px;background:#7a7a7a"></div>
<div class="t" style="left:8.4px;top:272.5px;width:16px;height:8px;text-align:center;font-size:6.6px;line-height:8px;color:#5a5a5a;transform:rotate(-90deg)">9</div>
<div style="left:15.2px;top:283.7px;width:2.6px;height:0.9px;background:#7a7a7a"></div>
<div class="t" style="left:8.4px;top:287.65px;width:16px;height:8px;text-align:center;font-size:6.6px;line-height:8px;color:#5a5a5a;transform:rotate(-90deg)">10</div>
<div style="left:15.2px;top:298.85px;width:2.6px;height:0.9px;background:#7a7a7a"></div>
<div class="t" style="left:8.4px;top:302.8px;width:16px;height:8px;text-align:center;font-size:6.6px;line-height:8px;color:#5a5a5a;transform:rotate(-90deg)">11</div>
<div style="left:15.2px;top:314.0px;width:2.6px;height:0.9px;background:#7a7a7a"></div>
<div class="t" style="left:8.4px;top:317.95px;width:16px;height:8px;text-align:center;font-size:6.6px;line-height:8px;color:#5a5a5a;transform:rotate(-90deg)">12</div>
<div style="left:15.2px;top:329.15px;width:2.6px;height:0.9px;background:#7a7a7a"></div>
<div class="t" style="left:8.4px;top:333.1px;width:16px;height:8px;text-align:center;font-size:6.6px;line-height:8px;color:#5a5a5a;transform:rotate(-90deg)">13</div>
<div style="left:15.2px;top:344.3px;width:2.6px;height:0.9px;background:#7a7a7a"></div>
<div class="t" style="left:8.4px;top:348.25px;width:16px;height:8px;text-align:center;font-size:6.6px;line-height:8px;color:#5a5a5a;transform:rotate(-90deg)">14</div>
<div style="left:15.2px;top:359.45px;width:2.6px;height:0.9px;background:#7a7a7a"></div>
<div class="t" style="left:8.4px;top:363.4px;width:16px;height:8px;text-align:center;font-size:6.6px;line-height:8px;color:#5a5a5a;transform:rotate(-90deg)">15</div>
<div style="left:15.2px;top:374.6px;width:2.6px;height:0.9px;background:#7a7a7a"></div>
<div class="t" style="left:8.4px;top:378.55px;width:16px;height:8px;text-align:center;font-size:6.6px;line-height:8px;color:#5a5a5a;transform:rotate(-90deg)">16</div>
<div style="left:15.2px;top:389.75px;width:2.6px;height:0.9px;background:#7a7a7a"></div>
<div class="t" style="left:8.4px;top:393.7px;width:16px;height:8px;text-align:center;font-size:6.6px;line-height:8px;color:#5a5a5a;transform:rotate(-90deg)">17</div>
<div style="left:15.2px;top:404.9px;width:2.6px;height:0.9px;background:#7a7a7a"></div>
<div class="t" style="left:8.4px;top:408.85px;width:16px;height:8px;text-align:center;font-size:6.6px;line-height:8px;color:#5a5a5a;transform:rotate(-90deg)">18</div>
<div style="left:15.2px;top:420.05px;width:2.6px;height:0.9px;background:#7a7a7a"></div>
<div class="t" style="left:8.4px;top:424.0px;width:16px;height:8px;text-align:center;font-size:6.6px;line-height:8px;color:#5a5a5a;transform:rotate(-90deg)">19</div>
<div style="left:15.2px;top:435.2px;width:2.6px;height:0.9px;background:#7a7a7a"></div>
<div style="left:994px;top:118px;width:13px;height:309px;background:linear-gradient(90deg,#dfe1e6,#e9ebef)"></div>
<div style="left:994px;top:118px;width:13px;height:30px;background:linear-gradient(#d2d5d9,#cbced3)"></div>
<div style="left:999px;top:121.4px;width:6.5px;height:1px;background:#777"></div>
<div style="left:995.2px;top:124.4px;width:12px;height:12.2px;background:#eef0f2;border:1px solid #8d9197;border-radius:1.5px"></div>
<svg style="left:996.6px;top:125.8px;" width="10" height="9.6" viewBox="0 0 10 9.6"><rect x="1.2" y="1" width="7" height="7.4" fill="#fff" stroke="#777" stroke-width=".7"/><path d="M2.6 3H6.8M2.6 4.8H6.8M2.6 6.6H5.4" stroke="#999" stroke-width=".6"/></svg>
<svg style="left:997.4px;top:141.4px;" width="6.4" height="3.6" viewBox="0 0 6.4 3.6"><path d="M0 3.6H6.4L3.2 0Z" fill="#333"/></svg>
<div style="left:995px;top:149.3px;width:11.6px;height:178px;background:linear-gradient(90deg,#f7f8f9,#e6e8ec 60%,#dcdfe4);border:1px solid #9a9ea5;border-radius:2px"></div>
<div style="left:998.4px;top:235.8px;width:4.8px;height:0.9px;background:#8f949b"></div>
<div style="left:998.4px;top:237.6px;width:4.8px;height:0.9px;background:#8f949b"></div>
<div style="left:998.4px;top:239.4px;width:4.8px;height:0.9px;background:#8f949b"></div>
<div style="left:290px;top:141.7px;width:17.4px;height:0.9px;background:#9a9a9a"></div>
<div style="left:306.6px;top:139.2px;width:0.9px;height:3.2px;background:#9a9a9a"></div>
<div style="left:307.3px;top:143.4px;width:161.3px;height:15.4px;background:#a9c8ee"></div>
<div style="left:307.3px;top:158.7px;width:215.3px;height:15.4px;background:#a9c8ee"></div>
<div style="left:307.3px;top:174px;width:236.7px;height:15.4px;background:#a9c8ee"></div>
<div style="left:307.3px;top:189.4px;width:206.3px;height:15.4px;background:#a9c8ee"></div>
<div style="left:307.3px;top:204.8px;width:181.0px;height:13.2px;background:#a9c8ee"></div>
<svg style="left:462px;top:150.0px;" width="5.6" height="5.6" viewBox="0 0 5.6 5.6"><path d="M5 0.2V3.4H1.2M2.8 1.6L0.8 3.4L2.8 5.2" fill="none" stroke="#4d6a94" stroke-width=".9"/></svg>
<svg style="left:515.2px;top:165.4px;" width="5.6" height="5.6" viewBox="0 0 5.6 5.6"><path d="M5 0.2V3.4H1.2M2.8 1.6L0.8 3.4L2.8 5.2" fill="none" stroke="#4d6a94" stroke-width=".9"/></svg>
<svg style="left:536.8px;top:180.8px;" width="5.6" height="5.6" viewBox="0 0 5.6 5.6"><path d="M5 0.2V3.4H1.2M2.8 1.6L0.8 3.4L2.8 5.2" fill="none" stroke="#4d6a94" stroke-width=".9"/></svg>
<svg style="left:505.6px;top:196.1px;" width="5.6" height="5.6" viewBox="0 0 5.6 5.6"><path d="M5 0.2V3.4H1.2M2.8 1.6L0.8 3.4L2.8 5.2" fill="none" stroke="#4d6a94" stroke-width=".9"/></svg>
<svg style="left:478.8px;top:211.0px;" width="5.6" height="5.6" viewBox="0 0 5.6 5.6"><path d="M5 0.2V3.4H1.2M2.8 1.6L0.8 3.4L2.8 5.2" fill="none" stroke="#4d6a94" stroke-width=".9"/></svg>
<svg style="left:308.6px;top:225.6px;" width="5.6" height="5.6" viewBox="0 0 5.6 5.6"><path d="M5 0.2V3.4H1.2M2.8 1.6L0.8 3.4L2.8 5.2" fill="none" stroke="#777" stroke-width=".9"/></svg>
<div class="t" style="left:307.4px;top:144.6px;font-size:10.9px;line-height:14px;color:#1b3a66;-webkit-text-stroke:.32px #1b3a66;transform-origin:0 50%;transform:scaleX(0.973)">human</div>
<div class="t" style="left:343px;top:144.6px;font-size:11.5px;line-height:14px;color:#1b3a66;-webkit-text-stroke:.32px #1b3a66;transform-origin:0 50%;transform:scaleX(0.958)">人类</div>
<div class="t" style="left:369.8px;top:144.6px;font-size:10.9px;line-height:14px;color:#1b3a66;-webkit-text-stroke:.32px #1b3a66;transform-origin:0 50%;transform:scaleX(0.826)">RADYSKL</div>
<div class="t" style="left:412.6px;top:144.6px;font-size:10.9px;line-height:14px;color:#1b3a66;-webkit-text-stroke:.32px #1b3a66;transform-origin:0 50%;transform:scaleX(0.837)">......</div>
<div class="t" style="left:431.7px;top:144.6px;font-size:10.9px;line-height:14px;color:#1b3a66;-webkit-text-stroke:.32px #1b3a66;transform-origin:0 50%;transform:scaleX(0.901)">DGDI1</div>
<div class="t" style="left:307.4px;top:160px;font-size:10.9px;line-height:14px;color:#1b3a66;-webkit-text-stroke:.32px #1b3a66;transform-origin:0 50%;transform:scaleX(0.948)">mus musculus</div>
<div class="t" style="left:377px;top:160px;font-size:11.5px;line-height:14px;color:#1b3a66;-webkit-text-stroke:.32px #1b3a66;transform-origin:0 50%;transform:scaleX(0.956)">小家鼠</div>
<div class="t" style="left:415.7px;top:160px;font-size:10.9px;line-height:14px;color:#1b3a66;-webkit-text-stroke:.32px #1b3a66;transform-origin:0 50%;transform:scaleX(0.818)">RADYSKL</div>
<div class="t" style="left:458px;top:160px;font-size:10.9px;line-height:14px;color:#1b3a66;-webkit-text-stroke:.32px #1b3a66;transform-origin:0 50%;transform:scaleX(0.837)">......</div>
<div class="t" style="left:473.6px;top:160px;font-size:10.9px;line-height:14px;color:#1b3a66;-webkit-text-stroke:.32px #1b3a66;transform-origin:0 50%;transform:scaleX(0.903)">DLGDI23</div>
<div class="t" style="left:307.4px;top:175.4px;font-size:10.9px;line-height:14px;color:#1b3a66;-webkit-text-stroke:.32px #1b3a66;transform-origin:0 50%;transform:scaleX(0.975)">Rattus norvegicus</div>
<div class="t" style="left:395px;top:175.4px;font-size:11.5px;line-height:14px;color:#1b3a66;-webkit-text-stroke:.32px #1b3a66;transform-origin:0 50%;transform:scaleX(0.956)">褐家鼠</div>
<div class="t" style="left:433.2px;top:175.4px;font-size:10.9px;line-height:14px;color:#1b3a66;-webkit-text-stroke:.32px #1b3a66;transform-origin:0 50%;transform:scaleX(0.824)">RADYSKL</div>
<div class="t" style="left:475.8px;top:175.4px;font-size:10.9px;line-height:14px;color:#1b3a66;-webkit-text-stroke:.32px #1b3a66;transform-origin:0 50%;transform:scaleX(0.837)">......</div>
<div class="t" style="left:494.3px;top:175.4px;font-size:10.9px;line-height:14px;color:#1b3a66;-webkit-text-stroke:.32px #1b3a66;transform-origin:0 50%;transform:scaleX(0.925)">DGDI128</div>
<div class="t" style="left:307.4px;top:190.7px;font-size:10.9px;line-height:14px;color:#1b3a66;-webkit-text-stroke:.32px #1b3a66;transform-origin:0 50%;transform:scaleX(0.961)">Domestic dog</div>
<div class="t" style="left:375px;top:190.7px;font-size:11.5px;line-height:14px;color:#1b3a66;-webkit-text-stroke:.32px #1b3a66;transform-origin:0 50%;transform:scaleX(0.958)">家犬</div>
<div class="t" style="left:402.5px;top:190.7px;font-size:10.9px;line-height:14px;color:#1b3a66;-webkit-text-stroke:.32px #1b3a66;transform-origin:0 50%;transform:scaleX(0.822)">RADYSKL</div>
<div class="t" style="left:445px;top:190.7px;font-size:10.9px;line-height:14px;color:#1b3a66;-webkit-text-stroke:.32px #1b3a66;transform-origin:0 50%;transform:scaleX(0.837)">......</div>
<div class="t" style="left:462.8px;top:190.7px;font-size:10.9px;line-height:14px;color:#1b3a66;-webkit-text-stroke:.32px #1b3a66;transform-origin:0 50%;transform:scaleX(0.951)">DGDI118</div>
<div class="t" style="left:307.4px;top:205.6px;font-size:10.9px;line-height:14px;color:#1b3a66;-webkit-text-stroke:.32px #1b3a66;transform-origin:0 50%;transform:scaleX(0.96)">macaque</div>
<div class="t" style="left:353.8px;top:205.6px;font-size:11.5px;line-height:14px;color:#1b3a66;-webkit-text-stroke:.32px #1b3a66;transform-origin:0 50%;transform:scaleX(0.967)">猕猴</div>
<div class="t" style="left:381px;top:205.6px;font-size:10.9px;line-height:14px;color:#1b3a66;-webkit-text-stroke:.32px #1b3a66;transform-origin:0 50%;transform:scaleX(0.818)">RADYSKL</div>
<div class="t" style="left:423.3px;top:205.6px;font-size:10.9px;line-height:14px;color:#1b3a66;-webkit-text-stroke:.32px #1b3a66;transform-origin:0 50%;transform:scaleX(0.837)">......</div>
<div class="t" style="left:442px;top:205.6px;font-size:10.9px;line-height:14px;color:#1b3a66;-webkit-text-stroke:.32px #1b3a66;transform-origin:0 50%;transform:scaleX(0.925)">DGDI68</div>
<svg style="left:307.4px;top:171.6px;" width="66" height="2.4" viewBox="0 0 66 2.4"><path d="M0 1.6L1.5 0.3L3 1.6L4.5 0.3L6 1.6L7.5 0.3L9 1.6L10.5 0.3L12 1.6L13.5 0.3L15 1.6L16.5 0.3L18 1.6L19.5 0.3L21 1.6L22.5 0.3L24 1.6L25.5 0.3L27 1.6L28.5 0.3L30 1.6L31.5 0.3L33 1.6L34.5 0.3L36 1.6L37.5 0.3L39 1.6L40.5 0.3L42 1.6L43.5 0.3L45 1.6L46.5 0.3L48 1.6L49.5 0.3L51 1.6L52.5 0.3L54 1.6L55.5 0.3L57 1.6L58.5 0.3L60 1.6L61.5 0.3L63 1.6L64.5 0.3L66 1.6" fill="none" stroke="#c8507a" stroke-width=".75" opacity=".85"/></svg>
<svg style="left:307.4px;top:187px;" width="85" height="2.4" viewBox="0 0 85 2.4"><path d="M0 1.6L1.5 0.3L3 1.6L4.5 0.3L6 1.6L7.5 0.3L9 1.6L10.5 0.3L12 1.6L13.5 0.3L15 1.6L16.5 0.3L18 1.6L19.5 0.3L21 1.6L22.5 0.3L24 1.6L25.5 0.3L27 1.6L28.5 0.3L30 1.6L31.5 0.3L33 1.6L34.5 0.3L36 1.6L37.5 0.3L39 1.6L40.5 0.3L42 1.6L43.5 0.3L45 1.6L46.5 0.3L48 1.6L49.5 0.3L51 1.6L52.5 0.3L54 1.6L55.5 0.3L57 1.6L58.5 0.3L60 1.6L61.5 0.3L63 1.6L64.5 0.3L66 1.6L67.5 0.3L69 1.6L70.5 0.3L72 1.6L73.5 0.3L75 1.6L76.5 0.3L78 1.6L79.5 0.3L81 1.6L82.5 0.3L84 1.6" fill="none" stroke="#c8507a" stroke-width=".75" opacity=".85"/></svg>
<div style="left:570px;top:132.2px;width:255.8px;height:244.4px;background:#d7ad6c;border:1px solid #c59a5a;box-shadow:0 1px 4px rgba(0,0,0,.25)"></div>
<div style="left:575.5px;top:156px;width:245.5px;height:215px;background:#f0f0f0"></div>
<div class="t" style="left:667.8px;top:137.6px;width:60px;text-align:center;font-size:11.1px;line-height:14px;color:#2e2616;-webkit-text-stroke:.15px #2e2616">制表位</div>
<div class="t" style="left:772.0px;top:135.2px;width:10px;text-align:center;font-size:9.6px;line-height:12px;color:#222;font-weight:bold">?</div>
<div style="left:787.7px;top:133.2px;width:32.4px;height:14.4px;background:#c84c4c"></div>
<svg style="left:800.4px;top:137px;" width="7" height="7" viewBox="0 0 7 7"><path d="M0.8 0.8L6.2 6.2M6.2 0.8L0.8 6.2" stroke="#fff" stroke-width="1.3"/></svg>
<div class="t" style="left:580px;top:158.5px;font-size:8.8px;line-height:12px;color:#1a1a1a;-webkit-text-stroke:.18px #1a1a1a;letter-spacing:.3px">制表位位置(<u>T</u>):</div>
<div class="t" style="left:749.8px;top:158.5px;font-size:8.8px;line-height:12px;color:#1a1a1a;-webkit-text-stroke:.18px #1a1a1a;letter-spacing:.3px">默认制表位(<u>F</u>):</div>
<div style="left:580px;top:171.4px;width:162.8px;height:12.8px;background:#fff;border:1px solid #abadb3"></div>
<div class="t" style="left:583px;top:171.9px;font-size:8.6px;line-height:12px;color:#1a1a1a;-webkit-text-stroke:.18px #1a1a1a">2</div>
<div style="left:588.2px;top:173.6px;width:0.8px;height:8.6px;background:#222"></div>
<div style="left:580px;top:184.7px;width:162.8px;height:54.2px;background:#fff;border:1px solid #828790"></div>
<div style="left:730px;top:185.6px;width:11.6px;height:52.4px;background:#f4f4f4"></div>
<svg style="left:733px;top:190.6px;" width="5.6" height="3.6" viewBox="0 0 5.6 3.6"><path d="M0.5 3.2L2.8 0.8L5.1 3.2" fill="none" stroke="#b8b8b8" stroke-width="1"/></svg>
<svg style="left:733px;top:230.8px;" width="5.6" height="3.6" viewBox="0 0 5.6 3.6"><path d="M0.5 0.4L2.8 2.8L5.1 0.4" fill="none" stroke="#b8b8b8" stroke-width="1"/></svg>
<div style="left:749.8px;top:171.4px;width:65.2px;height:12.8px;background:#fff;border:1px solid #abadb3"></div>
<div class="t" style="left:752.6px;top:171.9px;font-size:8.6px;line-height:12px;color:#1a1a1a;-webkit-text-stroke:.18px #1a1a1a">2 字符</div>
<div style="left:803.2px;top:172.2px;width:11px;height:5.8px;background:#f3f3f3;border:1px solid #b5b5b5"></div>
<div style="left:803.2px;top:177.8px;width:11px;height:5.8px;background:#f3f3f3;border:1px solid #b5b5b5"></div>
<svg style="left:806.7px;top:173.8px;" width="4" height="2.4" viewBox="0 0 4 2.4"><path d="M0 2.4H4L2 0Z" fill="#222"/></svg>
<svg style="left:806.7px;top:179.6px;" width="4" height="2.4" viewBox="0 0 4 2.4"><path d="M0 0H4L2 2.4Z" fill="#222"/></svg>
<div class="t" style="left:749.8px;top:190.6px;font-size:8.8px;line-height:12px;color:#1a1a1a;-webkit-text-stroke:.18px #1a1a1a">要清除的制表位:</div>
<div class="t" style="left:580px;top:241.0px;font-size:8.8px;line-height:12px;color:#1a1a1a;-webkit-text-stroke:.18px #1a1a1a">对齐方式</div>
<div style="left:618px;top:247.2px;width:197.6px;height:1px;background:#dcdcdc"></div>
<div class="t" style="left:580px;top:283.7px;font-size:8.8px;line-height:12px;color:#1a1a1a;-webkit-text-stroke:.18px #1a1a1a">前导符</div>
<div style="left:609px;top:289.9px;width:206.6px;height:1px;background:#dcdcdc"></div>
<svg style="left:586.8px;top:255px;" width="10" height="10" viewBox="0 0 10 10"><circle cx="5" cy="5" r="4.2" fill="#fff" stroke="#555" stroke-width=".9"/><circle cx="5" cy="5" r="2.5" fill="#222"/></svg>
<div class="t" style="left:599.1999999999999px;top:254.2px;font-size:8.8px;line-height:12px;color:#1a1a1a;-webkit-text-stroke:.18px #1a1a1a">左对齐(<u>L</u>)</div>
<svg style="left:665.2px;top:255px;" width="10" height="10" viewBox="0 0 10 10"><circle cx="5" cy="5" r="4.2" fill="#fff" stroke="#555" stroke-width=".9"/></svg>
<div class="t" style="left:677.6px;top:254.2px;font-size:8.8px;line-height:12px;color:#1a1a1a;-webkit-text-stroke:.18px #1a1a1a">居中(<u>C</u>)</div>
<svg style="left:743.4px;top:255px;" width="10" height="10" viewBox="0 0 10 10"><circle cx="5" cy="5" r="4.2" fill="#fff" stroke="#555" stroke-width=".9"/></svg>
<div class="t" style="left:755.8px;top:254.2px;font-size:8.8px;line-height:12px;color:#1a1a1a;-webkit-text-stroke:.18px #1a1a1a">右对齐(<u>R</u>)</div>
<svg style="left:586.8px;top:268.6px;" width="10" height="10" viewBox="0 0 10 10"><circle cx="5" cy="5" r="4.2" fill="#fff" stroke="#555" stroke-width=".9"/></svg>
<div class="t" style="left:599.1999999999999px;top:267.8px;font-size:8.8px;line-height:12px;color:#1a1a1a;-webkit-text-stroke:.18px #1a1a1a">小数点对齐(<u>D</u>)</div>
<svg style="left:665.2px;top:268.6px;" width="10" height="10" viewBox="0 0 10 10"><circle cx="5" cy="5" r="4.2" fill="#fff" stroke="#555" stroke-width=".9"/></svg>
<div class="t" style="left:677.6px;top:267.8px;font-size:8.8px;line-height:12px;color:#1a1a1a;-webkit-text-stroke:.18px #1a1a1a">竖线对齐(<u>B</u>)</div>
<svg style="left:586.8px;top:298.7px;" width="10" height="10" viewBox="0 0 10 10"><circle cx="5" cy="5" r="4.2" fill="#fff" stroke="#555" stroke-width=".9"/><circle cx="5" cy="5" r="2.5" fill="#222"/></svg>
<div class="t" style="left:599.1999999999999px;top:297.9px;font-size:8.8px;line-height:12px;color:#1a1a1a;-webkit-text-stroke:.18px #1a1a1a">1 无(<u>1</u>)</div>
<svg style="left:665.2px;top:298.7px;" width="10" height="10" viewBox="0 0 10 10"><circle cx="5" cy="5" r="4.2" fill="#fff" stroke="#555" stroke-width=".9"/></svg>
<div class="t" style="left:677.6px;top:297.9px;font-size:8.8px;line-height:12px;color:#1a1a1a;-webkit-text-stroke:.18px #1a1a1a">2 <span style="letter-spacing:2.1px"> .....</span>(<u>2</u>)</div>
<svg style="left:743.4px;top:298.7px;" width="10" height="10" viewBox="0 0 10 10"><circle cx="5" cy="5" r="4.2" fill="#fff" stroke="#555" stroke-width=".9"/></svg>
<div class="t" style="left:755.8px;top:297.9px;font-size:8.8px;line-height:12px;color:#1a1a1a;-webkit-text-stroke:.18px #1a1a1a">3 <span style="letter-spacing:1.9px"> ----</span>(<u>3</u>)</div>
<svg style="left:586.8px;top:311.7px;" width="10" height="10" viewBox="0 0 10 10"><circle cx="5" cy="5" r="4.2" fill="#fff" stroke="#555" stroke-width=".9"/></svg>
<div class="t" style="left:599.1999999999999px;top:310.9px;font-size:8.8px;line-height:12px;color:#1a1a1a;-webkit-text-stroke:.18px #1a1a1a">4 <span style="display:inline-block;width:13.6px;height:1px;border-bottom:1px solid #1a1a1a;margin:0 1.4px 0 3.6px;vertical-align:-1.6px"></span>(<u>4</u>)</div>
<svg style="left:665.2px;top:311.7px;" width="10" height="10" viewBox="0 0 10 10"><circle cx="5" cy="5" r="4.2" fill="#fff" stroke="#555" stroke-width=".9"/></svg>
<div class="t" style="left:677.6px;top:310.9px;font-size:8.8px;line-height:12px;color:#1a1a1a;-webkit-text-stroke:.18px #1a1a1a">5 <span style="letter-spacing:.5px"> ······</span>(<u>5</u>)</div>
<div style="left:631px;top:328.4px;width:53.5px;height:14.3px;background:linear-gradient(#f4f4f4,#e6e6e6);border:1px solid #b6b6b6"></div>
<div class="t" style="left:631.0px;top:329.75px;width:53.5px;text-align:center;font-size:8.8px;line-height:12px;color:#1a1a1a;-webkit-text-stroke:.18px #1a1a1a">设置(<u>S</u>)</div>
<div style="left:692px;top:328.4px;width:54.4px;height:14.3px;background:linear-gradient(#f4f4f4,#e6e6e6);border:1px solid #b6b6b6"></div>
<div class="t" style="left:692.0px;top:329.75px;width:54.4px;text-align:center;font-size:8.8px;line-height:12px;color:#1a1a1a;-webkit-text-stroke:.18px #1a1a1a">清除(<u>E</u>)</div>
<div style="left:754px;top:328.4px;width:60.7px;height:14.3px;background:linear-gradient(#f4f4f4,#e6e6e6);border:1px solid #b6b6b6"></div>
<div class="t" style="left:754.0px;top:329.75px;width:60.7px;text-align:center;font-size:8.8px;line-height:12px;color:#1a1a1a;-webkit-text-stroke:.18px #1a1a1a">全部清除(<u>A</u>)</div>
<div style="left:699px;top:351.4px;width:53.7px;height:14.5px;background:linear-gradient(#f4f4f4,#e6e6e6);border:1px solid #62a5de;box-shadow:inset 0 0 0 1px #bfe3f7"></div>
<div class="t" style="left:699.0px;top:352.85px;width:53.7px;text-align:center;font-size:8.8px;line-height:12px;color:#1a1a1a;-webkit-text-stroke:.18px #1a1a1a">确定</div>
<div style="left:760px;top:351.4px;width:54.4px;height:14.5px;background:linear-gradient(#f4f4f4,#e6e6e6);border:1px solid #b6b6b6"></div>
<div class="t" style="left:760.0px;top:352.85px;width:54.4px;text-align:center;font-size:8.8px;line-height:12px;color:#1a1a1a;-webkit-text-stroke:.18px #1a1a1a">取消</div>
</div></body></html>
